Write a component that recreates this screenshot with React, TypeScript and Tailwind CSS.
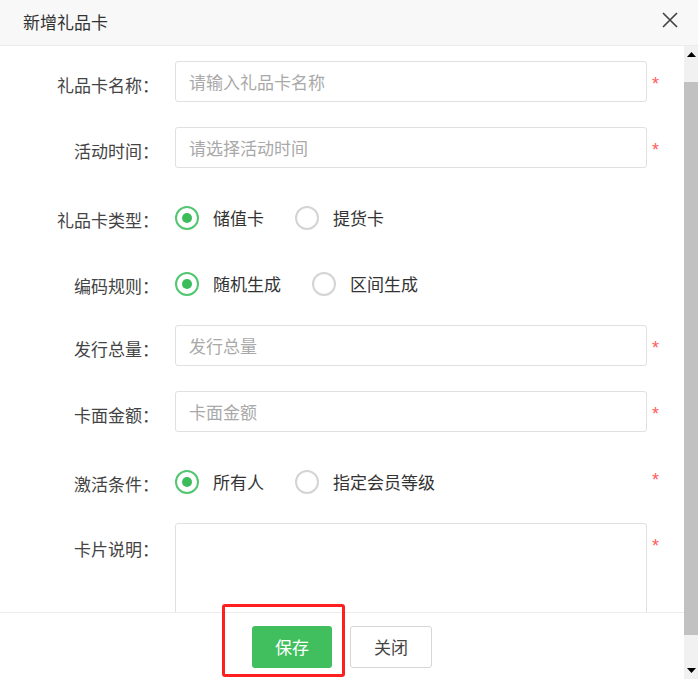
import React from "react";

const labelBase =
  "w-[159px] shrink-0 text-right text-[17px] text-[#444] leading-[20px]";

function Star({ pt = "pt-[14px]" }: { pt?: string }) {
  return (
    <span
      className={`ml-[5px] ${pt} text-[18px] leading-none text-[#ff5b5b] font-['Liberation_Sans',sans-serif]`}
    >
      *
    </span>
  );
}

function InputRow({ label, placeholder }: { label: string; placeholder: string }) {
  return (
    <div className="flex h-[41px] shrink-0">
      <div className={`${labelBase} pt-[14px]`}>{label}</div>
      <input
        className="ml-[16px] w-[472px] h-[41px] border border-[#e0e0e0] rounded-[3px] px-[13px] text-[17px] text-[#333] placeholder:text-[#a9a9a9] outline-none bg-white"
        placeholder={placeholder}
      />
      <Star />
    </div>
  );
}

function Radio({ checked, text }: { checked?: boolean; text: string }) {
  return (
    <div className="flex items-center">
      {checked ? (
        <span className="w-[24px] h-[24px] rounded-full border-2 border-[#52c671] flex items-center justify-center">
          <span className="w-[10px] h-[10px] rounded-full bg-[#3cbc5a]" />
        </span>
      ) : (
        <span className="w-[24px] h-[24px] rounded-full border-2 border-[#d4d4d4]" />
      )}
      <span className="ml-[14px] text-[17px] leading-[22px] text-[#333]">{text}</span>
    </div>
  );
}

function RadioRow({
  label,
  a,
  b,
  required,
}: {
  label: string;
  a: string;
  b: string;
  required?: boolean;
}) {
  return (
    <div className="flex h-[41px] shrink-0">
      <div className={`${labelBase} pt-[16px] leading-[21px]`}>{label}</div>
      <div className="ml-[16px] w-[472px] h-[41px] pt-[8px] flex items-center gap-[31px]">
        <Radio checked text={a} />
        <Radio text={b} />
      </div>
      {required && <Star />}
    </div>
  );
}

export default function App() {
  return (
    <div className="w-[698px] h-[679px] bg-white flex flex-col overflow-hidden font-['Noto_Sans_CJK_SC','Noto_Sans',sans-serif]">
      <header className="h-[46px] shrink-0 bg-[#f8f8f8] border-b border-[#ececec] flex items-center justify-between pl-[23px] pr-[20px]">
        <span className="text-[17px] text-[#333] leading-none -mt-[3px]">新增礼品卡</span>
        <svg width="16" height="16" viewBox="0 0 16 16" className="-mt-[5px]">
          <path d="M1 1 L15 15 M15 1 L1 15" stroke="#444" strokeWidth="1.7" fill="none" />
        </svg>
      </header>
      <div className="flex flex-1 min-h-0">
        <div className="flex-1 min-w-0 flex flex-col">
          <div className="flex-1 min-h-0 overflow-hidden pt-[15px] flex flex-col gap-[25px]">
            <InputRow label="礼品卡名称：" placeholder="请输入礼品卡名称" />
            <InputRow label="活动时间：" placeholder="请选择活动时间" />
            <RadioRow label="礼品卡类型：" a="储值卡" b="提货卡" />
            <RadioRow label="编码规则：" a="随机生成" b="区间生成" />
            <InputRow label="发行总量：" placeholder="发行总量" />
            <InputRow label="卡面金额：" placeholder="卡面金额" />
            <RadioRow label="激活条件：" a="所有人" b="指定会员等级" required />
            <div className="flex shrink-0">
              <div className={`${labelBase} pt-[16px]`}>卡片说明：</div>
              <textarea className="ml-[16px] w-[472px] h-[120px] border border-[#e0e0e0] rounded-[3px] resize-none outline-none" />
              <Star />
            </div>
          </div>
          <footer className="h-[67px] shrink-0 border-t border-[#ececec] flex items-center justify-center gap-[18px] relative pt-[1px]">
            <button className="w-[80px] h-[42px] rounded-[3px] bg-[#41bf5e] text-white text-[17px] leading-none">
              保存
            </button>
            <button className="w-[82px] h-[42px] rounded-[3px] bg-white border border-[#d6d6d6] text-[#444] text-[17px] leading-none">
              关闭
            </button>
            <div className="absolute left-[222px] top-[-9px] w-[123px] h-[73px] border-[3px] border-[#ff1f1f] rounded-[3px] pointer-events-none" />
          </footer>
        </div>
        <div className="w-[14px] shrink-0 bg-[#f1f1f1] flex flex-col">
          <div className="h-[17px] flex items-center justify-center">
            <svg width="9" height="5" viewBox="0 0 9 5">
              <path d="M0 5 L4.5 0 L9 5 Z" fill="#000" />
            </svg>
          </div>
          <div className="h-[19px]" />
          <div className="flex-1 bg-[#c1c1c1]" />
          <div className="h-[27px]" />
          <div className="h-[17px] flex items-center justify-center">
            <svg width="9" height="5" viewBox="0 0 9 5">
              <path d="M0 0 L9 0 L4.5 5 Z" fill="#000" />
            </svg>
          </div>
        </div>
      </div>
    </div>
  );
}
